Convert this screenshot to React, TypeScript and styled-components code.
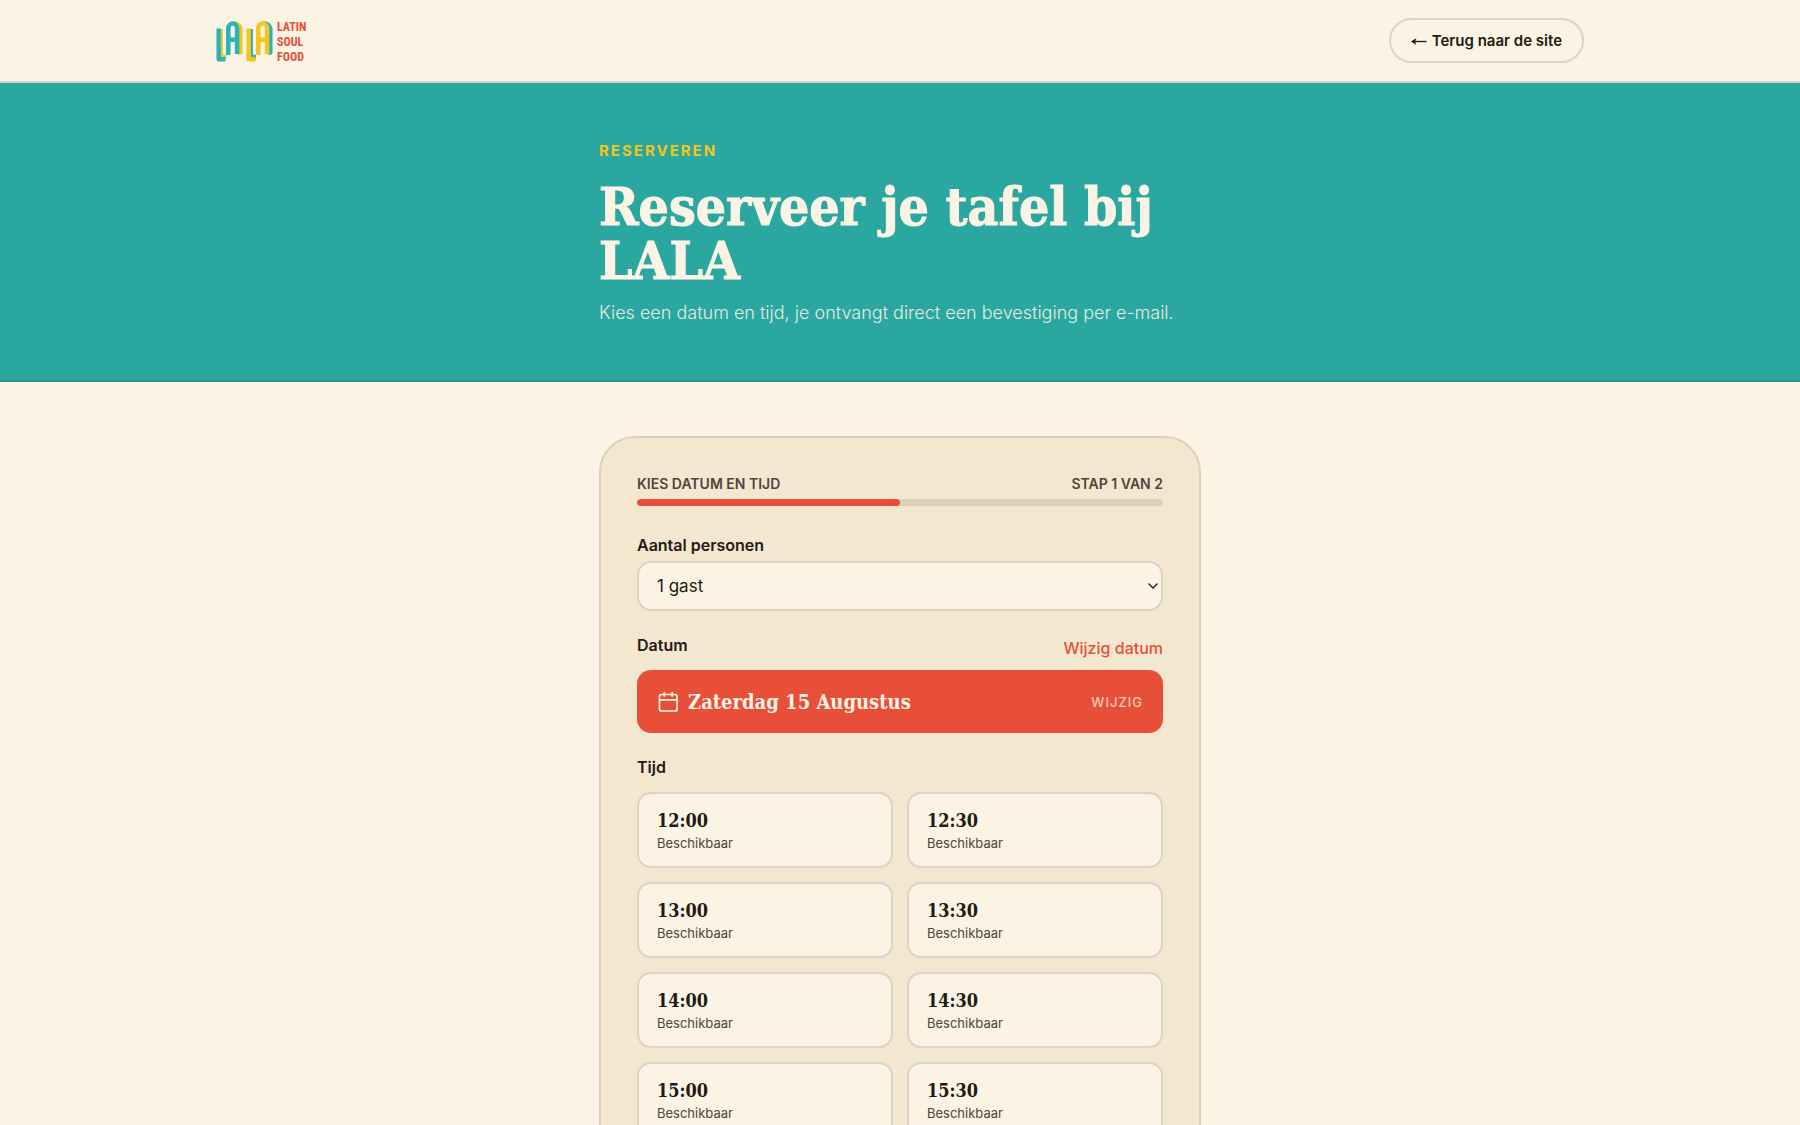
import React, { useState } from "react";
import styled, { createGlobalStyle } from "styled-components";

const color = {
  cream: "#fbf3e3",
  sand: "#f3e7cf",
  teal: "#2aa7a1",
  tomato: "#e84f38",
  sun: "#f5c518",
  ink: "#231a14",
  soft: "#4f453b",
  line: "#dcd3c5",
  edge: "#ddd0b9",
};

const sans = `Inter, "Liberation Sans", sans-serif`;
const serif = `"DejaVu Serif Condensed", "DejaVu Serif", serif`;

const GlobalStyle = createGlobalStyle`
  *, *::before, *::after { box-sizing: border-box; }
  body {
    margin: 0;
    background: ${color.cream};
    color: ${color.ink};
    font-family: ${sans};
    font-size: 16px;
    line-height: 24px;
    -webkit-font-smoothing: antialiased;
  }
  button, select { font: inherit; color: inherit; }
`;

const Header = styled.header`
  border-bottom: 2px solid ${color.line};
`;

const HeaderInner = styled.div`
  max-width: 1440px;
  margin: 0 auto;
  padding: 18px 36px;
  display: flex;
  align-items: center;
  justify-content: space-between;
`;

const LogoLink = styled.a`
  display: block;
  line-height: 0;
`;

const BackLink = styled.a`
  display: inline-flex;
  align-items: center;
  gap: 5px;
  padding: 9px 20px;
  border: 2px solid ${color.line};
  border-radius: 24px;
  font-size: 15px;
  font-weight: 600;
  line-height: 23px;
  color: ${color.ink};
  text-decoration: none;
`;

const Hero = styled.section`
  padding: 54px 36px;
  background: ${color.teal};
  border-bottom: 2px solid #279791;
`;

const Column = styled.div`
  max-width: 602px;
  margin: 0 auto;
`;

const Eyebrow = styled.p`
  margin: 0;
  color: ${color.sun};
  font-size: 15px;
  font-weight: 700;
  line-height: 28px;
  letter-spacing: 2px;
  text-transform: uppercase;
`;

const Title = styled.h1`
  margin: 14px 0 12px;
  color: ${color.cream};
  font-family: ${serif};
  font-size: 53px;
  font-weight: 700;
  line-height: 54px;
  -webkit-text-stroke: 1px ${color.cream};
`;

const Lead = styled.p`
  margin: 0;
  color: ${color.cream};
  font-size: 18px;
  font-weight: 300;
  line-height: 27px;
  opacity: 0.9;
`;

const Main = styled.main`
  padding: 54px 36px;
`;

const Card = styled.form`
  display: flex;
  flex-direction: column;
  max-width: 602px;
  margin: 0 auto;
  padding: 36px;
  border: 2px solid ${color.edge};
  border-radius: 36px;
  background: ${color.sand};
`;

const StepRow = styled.div`
  display: flex;
  justify-content: space-between;
  color: ${color.soft};
  font-size: 14px;
  font-weight: 600;
  line-height: 20px;
  text-transform: uppercase;
`;

const Track = styled.div`
  height: 7px;
  margin-top: 5px;
  border-radius: 4px;
  background: ${color.edge};
  overflow: hidden;
`;

const Fill = styled.div<{ $part: number }>`
  width: ${(p) => p.$part * 100}%;
  height: 100%;
  border-radius: 4px;
  background: ${color.tomato};
`;

const Label = styled.label`
  font-size: 16px;
  font-weight: 600;
  line-height: 24px;
`;

const Field = styled.div`
  display: flex;
  flex-direction: column;
  gap: 4px;
  margin-top: 27px;
`;

const SelectWrap = styled.div`
  position: relative;
  svg {
    position: absolute;
    right: 5px;
    top: 50%;
    margin-top: -5px;
    pointer-events: none;
  }
`;

const Select = styled.select`
  display: block;
  width: 100%;
  height: 50px;
  padding: 0 18px;
  border: 2px solid ${color.line};
  border-radius: 14px;
  background: ${color.cream};
  font-size: 17px;
  appearance: none;
`;

const FieldHead = styled.div`
  display: flex;
  justify-content: space-between;
  margin-top: 22px;
`;

const TextButton = styled.button`
  padding: 2px 0 0;
  border: 0;
  background: none;
  color: ${color.tomato};
  font-size: 16px;
  font-weight: 500;
  line-height: 26px;
  cursor: pointer;
`;

const DateButton = styled.button`
  display: flex;
  align-items: center;
  gap: 9px;
  width: 100%;
  height: 63px;
  margin-top: 9px;
  padding: 0 20px;
  border: 0;
  border-radius: 14px;
  background: ${color.tomato};
  color: ${color.cream};
  cursor: pointer;
`;

const DateText = styled.span`
  font-family: ${serif};
  font-size: 20px;
  font-weight: 700;
`;

const DateHint = styled.span`
  margin-left: auto;
  font-size: 13px;
  font-weight: 500;
  letter-spacing: 1px;
  text-transform: uppercase;
  opacity: 0.75;
`;

const TimeSet = styled.fieldset`
  min-width: 0;
  margin: 22px 0 0;
  padding: 0;
  border: 0;
`;

const Legend = styled.legend`
  padding: 0;
  font-size: 16px;
  font-weight: 600;
  line-height: 24px;
`;

const Slots = styled.div`
  display: grid;
  grid-template-columns: 1fr 1fr;
  gap: 14px;
  margin-top: 13px;
`;

const Slot = styled.button`
  display: flex;
  flex-direction: column;
  justify-content: center;
  height: 76px;
  padding: 2px 18px 0;
  border: 2px solid ${color.line};
  border-radius: 14px;
  background: ${color.cream};
  text-align: left;
  cursor: pointer;
`;

const SlotTime = styled.span`
  font-family: ${serif};
  font-size: 18px;
  font-weight: 700;
  line-height: 24px;
`;

const SlotState = styled.span`
  color: ${color.soft};
  font-size: 13px;
  line-height: 20px;
`;

const LogoWords = styled.text`
  fill: ${color.tomato};
  font-family: "Roboto Condensed", "Liberation Sans Narrow", "Liberation Sans", sans-serif;
  font-size: 12px;
  font-weight: 700;
`;

function Logo() {
  const bar = "M2.700 9.500V40.200H9.500";
  const arch = "M12.300 36V9.200a4.400 4.600 0 0 1 8.800 0V35M12.300 20.700H21.100";
  const barShade = "M4.700 10V38H10";
  const archShade = "M17.500 4.500a6 6 0 0 1 6.800 5.500V33.500H22";
  return (
    <svg width="90" height="44" viewBox="0 0 90 44" role="img" aria-label="LALA Latin Soul Food">
      <g fill="none" strokeWidth="4.500" strokeLinejoin="round">
        <g stroke="#f9c51b">
          <path d={barShade} />
          <path d={archShade} />
        </g>
        <g stroke="#28b3bd">
          <path d={bar} />
          <path d={arch} />
        </g>
        <g transform="translate(30 0)">
          <g stroke="#28b3bd">
            <path d={barShade} />
            <path d={archShade} />
          </g>
          <g stroke="#f9c51b">
            <path d={bar} />
            <path d={arch} />
          </g>
        </g>
      </g>
      <LogoWords x="61" y="12">LATIN</LogoWords>
      <LogoWords x="61" y="27">SOUL</LogoWords>
      <LogoWords x="61" y="42">FOOD</LogoWords>
    </svg>
  );
}

const ArrowLeft = () => (
  <svg width="16" height="12" viewBox="0 0 16 12" aria-hidden="true">
    <path d="M0 6.500L5.500 3Q4.300 5 4.300 6.500Q4.300 8 5.500 10Z" fill={color.ink} />
    <path d="M3 6.500H15.500" stroke={color.ink} strokeWidth="1.300" />
  </svg>
);

const Chevron = () => (
  <svg width="10" height="10" viewBox="0 0 10 10" fill="none" aria-hidden="true">
    <path d="M0.500 2.500L5 7L9.500 2.500" stroke={color.ink} strokeWidth="1.300" />
  </svg>
);

const CalendarIcon = () => (
  <svg
    width="22"
    height="22"
    viewBox="0 0 22 22"
    fill="none"
    stroke="currentColor"
    strokeWidth="1.700"
    strokeLinecap="round"
    strokeLinejoin="round"
    aria-hidden="true"
  >
    <rect x="2.500" y="3.500" width="17.500" height="16.500" rx="2" />
    <path d="M2.500 8.800H20M7.300 1.500V5M15.200 1.500V5" />
  </svg>
);

const times = ["12:00", "12:30", "13:00", "13:30", "14:00", "14:30", "15:00", "15:30"];

export default function App() {
  const [guests, setGuests] = useState("1");
  return (
    <>
      <GlobalStyle />
      <Header>
        <HeaderInner>
          <LogoLink href="#">
            <Logo />
          </LogoLink>
          <BackLink href="#">
            <ArrowLeft />
            Terug naar de site
          </BackLink>
        </HeaderInner>
      </Header>
      <Hero>
        <Column>
          <Eyebrow>Reserveren</Eyebrow>
          <Title>Reserveer je tafel bij LALA</Title>
          <Lead>Kies een datum en tijd, je ontvangt direct een bevestiging per e-mail.</Lead>
        </Column>
      </Hero>
      <Main>
        <Card>
          <StepRow>
            <span>Kies datum en tijd</span>
            <span>Stap 1 van 2</span>
          </StepRow>
          <Track>
            <Fill $part={0.5} />
          </Track>
          <Field>
            <Label htmlFor="guests">Aantal personen</Label>
            <SelectWrap>
              <Select id="guests" value={guests} onChange={(e) => setGuests(e.target.value)}>
                <option value="1">1 gast</option>
                <option value="2">2 gasten</option>
                <option value="3">3 gasten</option>
                <option value="4">4 gasten</option>
              </Select>
              <Chevron />
            </SelectWrap>
          </Field>
          <FieldHead>
            <Label htmlFor="date">Datum</Label>
            <TextButton type="button">Wijzig datum</TextButton>
          </FieldHead>
          <DateButton id="date" type="button">
            <CalendarIcon />
            <DateText>Zaterdag 15 Augustus</DateText>
            <DateHint>Wijzig</DateHint>
          </DateButton>
          <TimeSet>
            <Legend>Tijd</Legend>
            <Slots>
              {times.map((time) => (
                <Slot key={time} type="button">
                  <SlotTime>{time}</SlotTime>
                  <SlotState>Beschikbaar</SlotState>
                </Slot>
              ))}
            </Slots>
          </TimeSet>
        </Card>
      </Main>
    </>
  );
}
